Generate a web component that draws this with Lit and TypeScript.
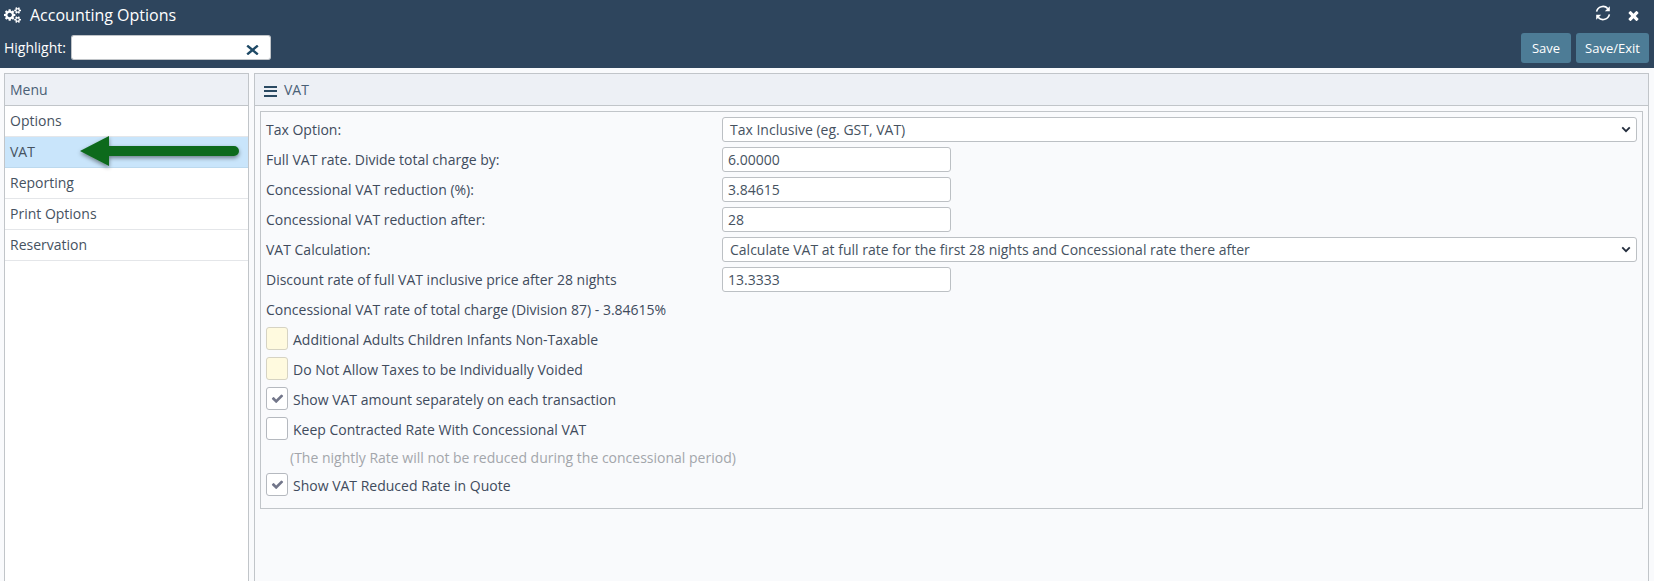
import { LitElement, html, css, svg } from "lit";
import { customElement } from "lit/decorators.js";

const COGS = "M896 896q0-106-75-181t-181-75-181 75-75 181 75 181 181 75 181-75 75-181zm768 512q0-52-38-90t-90-38-90 38-38 90q0 53 37.5 90.5t90.5 37.5 90.5-37.5 37.5-90.5zm0-1024q0-52-38-90t-90-38-90 38-38 90q0 53 37.5 90.5t90.5 37.5 90.5-37.5 37.5-90.5zm-384 421v185q0 10-7 19.5t-16 10.5l-155 24q-11 35-32 76 34 48 90 115 7 11 7 20 0 12-7 19-23 30-82.5 89.5t-78.5 59.5q-11 0-21-7l-115-90q-37 19-77 31-11 108-23 155-7 24-30 24h-186q-11 0-20-7.5t-10-17.5l-23-153q-34-10-75-31l-118 89q-7 7-20 7-11 0-21-8-144-133-144-160 0-9 7-19 10-14 41-53t47-61q-23-44-35-82l-152-24q-10-1-17-9.5t-7-19.5v-185q0-10 7-19.5t16-10.5l155-24q11-35 32-76-34-48-90-115-7-11-7-20 0-12 7-20 22-30 82-89t79-59q11 0 21 7l115 90q34-18 77-32 11-108 23-154 7-24 30-24h186q11 0 20 7.5t10 17.5l23 153q34 10 75 31l118-89q8-7 20-7 11 0 21 8 144 133 144 160 0 8-7 19-12 16-42 54t-45 60q23 48 34 82l152 23q10 2 17 10.5t7 19.5zm640 533v140q0 16-149 31-12 27-30 52 51 113 51 138 0 4-4 7-122 71-124 71-8 0-46-47t-52-68q-20 2-30 2t-30-2q-14 21-52 68t-46 47q-2 0-124-71-4-3-4-7 0-25 51-138-18-25-30-52-149-15-149-31v-140q0-16 149-31 13-29 30-52-51-113-51-138 0-4 4-7 4-2 35-20t59-34 30-16q8 0 46 46.5t52 67.5q20-2 30-2t30 2q51-71 92-112l6-2q4 0 124 70 4 3 4 7 0 25-51 138 17 23 30 52 149 15 149 31zm0-1024v140q0 16-149 31-12 27-30 52 51 113 51 138 0 4-4 7-122 71-124 71-8 0-46-47t-52-68q-20 2-30 2t-30-2q-14 21-52 68t-46 47q-2 0-124-71-4-3-4-7 0-25 51-138-18-25-30-52-149-15-149-31v-140q0-16 149-31 13-29 30-52-51-113-51-138 0-4 4-7 4-2 35-20t59-34 30-16q8 0 46 46.5t52 67.5q20-2 30-2t30 2q51-71 92-112l6-2q4 0 124 70 4 3 4 7 0 25-51 138 17 23 30 52 149 15 149 31z";
const TIMES = "M1490 1322q0 40-28 68l-136 136q-28 28-68 28t-68-28l-294-294-294 294q-28 28-68 28t-68-28l-136-136q-28-28-28-68t28-68l294-294-294-294q-28-28-28-68t28-68l136-136q28-28 68-28t68 28l294 294 294-294q28-28 68-28t68 28l136 136q28 28 28 68t-28 68l-294 294 294 294q28 28 28 68z";
const CHECK = "M1671 566q0 40-28 68l-724 724-136 136q-28 28-68 28t-68-28l-136-136-362-362q-28-28-28-68t28-68l136-136q28-28 68-28t68 28l294 295 656-657q28-28 68-28t68 28l136 136q28 28 28 68z";

const icon = (d: string, cls: string, vb = "0 0 1792 1792") =>
  html`<svg class=${cls} viewBox=${vb} fill="currentColor" aria-hidden="true">${svg`<path d=${d}></path>`}</svg>`;

const chevron = html`<svg class="chev" viewBox="0 0 12 8" aria-hidden="true"><path d="M1.5 1.5 6 6l4.5-4.5" fill="none" stroke="currentColor" stroke-width="2.2"></path></svg>`;

@customElement("app-root")
export class AppRoot extends LitElement {
  static styles = css`
    :host {
      display: block;
      width: 1654px;
      height: 581px;
      overflow: hidden;
      position: relative;
      background: #f9fafc;
      font-family: "Open Sans", sans-serif;
      font-size: 14px;
      color: #404b5c;
    }
    * { box-sizing: border-box; }
    header {
      height: 68px;
      background: #2e455d;
      color: #fff;
      display: flex;
      flex-direction: column;
    }
    .top {
      height: 30px;
      display: flex;
      align-items: center;
      padding: 0 0 0 4px;
    }
    .cogs { width: 17px; height: 16px; margin-right: 9px; }
    .title { font-size: 16px; flex: 1; line-height: 30px; }
    .refresh { width: 20px; height: 20px; margin-right: 13px; margin-bottom: 4px; }
    .close { width: 15px; height: 15px; margin-right: 13px; }
    .bar {
      display: flex;
      align-items: flex-start;
      padding: 3px 5px 0 4px;
    }
    .hl-label { line-height: 25px; margin-top: 2px; margin-right: 5px; font-size: 14px; }
    .hl-input {
      width: 170px;
      height: 25px;
      margin-top: 2px;
      background: #fff;
      border: 1px solid #c0c4c8;
      border-right: 0;
      border-radius: 3px 0 0 3px;
    }
    .hl-clear {
      width: 30px;
      height: 25px;
      margin-top: 2px;
      background: #fff;
      border: 1px solid #c0c4c8;
      border-left: 0;
      border-radius: 0 3px 3px 0;
      display: flex;
      align-items: center;
      justify-content: center;
      padding-right: 5px;
      color: #1f4a66;
    }
    .hl-clear svg { width: 13px; height: 10px; margin-top: 4px; }
    .spacer { flex: 1; }
    .btn {
      height: 30px;
      background: #4d7c96;
      border-radius: 3px;
      color: #fff;
      font-size: 13px;
      line-height: 30px;
      text-align: center;
      margin-left: 5px;
    }
    .save { width: 50px; }
    .saveexit { width: 73px; }
    .body {
      display: flex;
      padding: 5px 5px 0 4px;
      gap: 5px;
      height: 513px;
    }
    .side {
      width: 245px;
      border: 1px solid #c1c5c9;
      border-bottom: 0;
      height: 520px;
      background: #fff;
      flex: none;
    }
    .panel-head {
      height: 32px;
      background: #edf0f5;
      border-bottom: 1px solid #c1c5c9;
      line-height: 31px;
      padding-left: 5px;
      color: #4a6075;
    }
    .item {
      height: 31px;
      line-height: 30px;
      padding-left: 5px;
      border-bottom: 1px solid #e4e6e9;
      color: #46525f;
    }
    .item.on { background: #c9e5fb; border-bottom-color: #bcd9ee; }
    .main {
      flex: 1;
      border: 1px solid #c1c5c9;
      border-bottom: 0;
      height: 520px;
      background: #f9fafc;
    }
    .main .panel-head { display: flex; align-items: center; padding-left: 9px; }
    .bars { width: 13px; height: 11px; margin-right: 7px; margin-top: 3px; display: flex; flex-direction: column; justify-content: space-between; }
    .bars i { display: block; height: 2px; background: #2a4a62; }
    .box {
      margin: 5px 5px 0 5px;
      border: 1px solid #c1c5c9;
      height: 398px;
      padding: 5px 5px 0 5px;
    }
    .row {
      display: flex;
      height: 25px;
      margin-bottom: 5px;
      align-items: center;
    }
    .row label { width: 456px; flex: none; }
    .field {
      height: 25px;
      background: #fff;
      border: 1px solid #bcc0c4;
      border-radius: 3px;
      line-height: 23px;
      padding-left: 5px;
      color: #46525f;
    }
    .input { width: 229px; }
    .select {
      flex: 1;
      padding-left: 7px;
      display: flex;
      align-items: center;
      justify-content: space-between;
      padding-right: 5px;
    }
    .chev { width: 10px; height: 7px; color: #232d3d; }
    .plain { height: 25px; line-height: 25px; margin-top: 5px; margin-bottom: 5px; }
    .chk {
      display: flex;
      align-items: center;
      height: 23px;
      margin-bottom: 7px;
    }
    .chk span:last-child { padding-top: 2px; }
    .cb {
      width: 22px;
      height: 23px;
      border: 1px solid #b5b9bf;
      border-radius: 3px;
      background: #fff;
      margin-right: 5px;
      display: flex;
      align-items: center;
      justify-content: center;
      color: #72768a;
      flex: none;
    }
    .cb.y { background: #fffadf; border-color: #d6d3c3; }
    .cb svg { width: 13px; height: 13px; }
    .note { color: #a3a6ab; padding-left: 24px; height: 22px; line-height: 22px; margin-bottom: 4px; }
    .arrow {
      position: absolute;
      left: 76px;
      top: 132px;
      width: 170px;
      height: 40px;
      overflow: visible;
    }
  `;

  private checkRow(text: string, state: "y" | "on" | "off") {
    return html`<div class="chk">
      <span class="cb ${state === "y" ? "y" : ""}">${state === "on" ? icon(CHECK, "") : ""}</span>
      <span>${text}</span>
    </div>`;
  }

  render() {
    return html`
      <header>
        <div class="top">
          ${icon(COGS, "cogs", "0 0 1920 1792")}
          <span class="title">Accounting Options</span>
          <svg class="refresh" viewBox="0 0 20 20" aria-hidden="true">
            <path d="M3.6 8.6A6.5 6.5 0 0 1 14.8 5.6" fill="none" stroke="currentColor" stroke-width="1.6"></path>
            <path d="M16.8 3.2v5h-5z" fill="currentColor"></path>
            <path d="M16.4 11.4A6.5 6.5 0 0 1 5.2 14.4" fill="none" stroke="currentColor" stroke-width="1.6"></path>
            <path d="M3.2 16.8v-5h5z" fill="currentColor"></path>
          </svg>
          ${icon(TIMES, "close")}
        </div>
        <div class="bar">
          <span class="hl-label">Highlight:</span>
          <div class="hl-input"></div>
          <div class="hl-clear">
            <svg viewBox="0 0 13 10" aria-hidden="true"><path d="M1.2.6 11.8 9.4M11.8.6 1.2 9.4" fill="none" stroke="currentColor" stroke-width="2.4"></path></svg>
          </div>
          <div class="spacer"></div>
          <div class="btn save">Save</div>
          <div class="btn saveexit">Save/Exit</div>
        </div>
      </header>
      <div class="body">
        <aside class="side">
          <div class="panel-head">Menu</div>
          <div class="item">Options</div>
          <div class="item on">VAT</div>
          <div class="item">Reporting</div>
          <div class="item">Print Options</div>
          <div class="item">Reservation</div>
        </aside>
        <section class="main">
          <div class="panel-head"><span class="bars"><i></i><i></i><i></i></span>VAT</div>
          <div class="box">
            <div class="row"><label>Tax Option:</label><div class="field select"><span>Tax Inclusive (eg. GST, VAT)</span>${chevron}</div></div>
            <div class="row"><label>Full VAT rate. Divide total charge by:</label><div class="field input">6.00000</div></div>
            <div class="row"><label>Concessional VAT reduction (%):</label><div class="field input">3.84615</div></div>
            <div class="row"><label>Concessional VAT reduction after:</label><div class="field input">28</div></div>
            <div class="row"><label>VAT Calculation:</label><div class="field select"><span>Calculate VAT at full rate for the first 28 nights and Concessional rate there after</span>${chevron}</div></div>
            <div class="row"><label>Discount rate of full VAT inclusive price after 28 nights</label><div class="field input">13.3333</div></div>
            <div class="plain">Concessional VAT rate of total charge (Division 87) - 3.84615%</div>
            ${this.checkRow("Additional Adults Children Infants Non-Taxable", "y")}
            ${this.checkRow("Do Not Allow Taxes to be Individually Voided", "y")}
            ${this.checkRow("Show VAT amount separately on each transaction", "on")}
            ${this.checkRow("Keep Contracted Rate With Concessional VAT", "off")}
            <div class="note">(The nightly Rate will not be reduced during the concessional period)</div>
            ${this.checkRow("Show VAT Reduced Rate in Quote", "on")}
          </div>
        </section>
      </div>
      <svg class="arrow" viewBox="0 0 170 40" aria-hidden="true">
        <defs><filter id="s" x="-10%" y="-40%" width="120%" height="200%"><feDropShadow dx="0" dy="2" stdDeviation="2" flood-color="#000" flood-opacity=".45"></feDropShadow></filter></defs>
        <path d="M4 19 33 4v10h125a5 5 0 0 1 0 10H33v10z" fill="#0f6a1c" filter="url(#s)"></path>
      </svg>
    `;
  }
}
